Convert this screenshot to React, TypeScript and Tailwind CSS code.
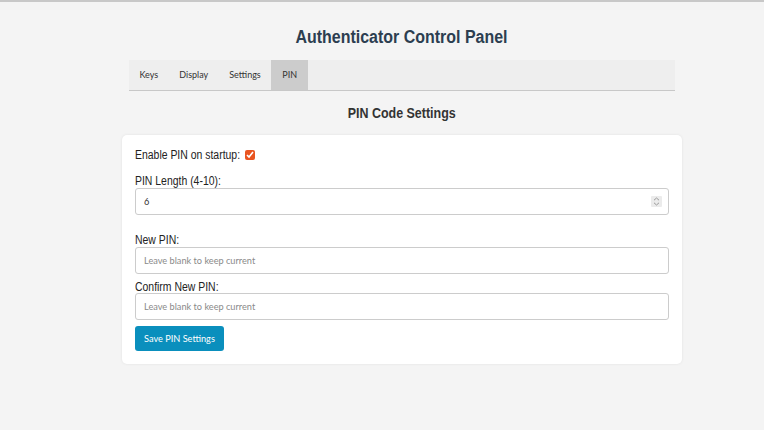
import React from "react";

export default function App() {
  const ui = { fontFamily: "Lato, 'Open Sans', sans-serif" };
  const inputCls =
    "block w-full h-[27px] border border-[#cccccc] rounded-[3px] px-[8px] text-[9.2px] text-[#333] bg-white outline-none placeholder:text-[#8a8a8a]";
  const label = "block w-[300px] whitespace-nowrap origin-left scale-x-[0.87] text-[12px] leading-[14px]";
  return (
    <div
      className="min-h-[430px] bg-[#f4f4f4] border-t-2 border-[#c8c8c8] text-[#222]"
      style={{ fontFamily: "'Liberation Sans', Arial, sans-serif" }}
    >
      <div className="flex flex-col items-center pl-[40px]">
        <h1 className="mt-[24px] text-[18px] leading-[22px] font-bold text-[#2c3e50] scale-x-[0.887] whitespace-nowrap">
          Authenticator Control Panel
        </h1>
        <div
          className="mt-[12px] w-[546px] h-[31px] bg-[#eeeeee] border-b border-[#c8c8c8] flex text-[9px] text-[#333]"
          style={ui}
        >
          <div className="px-[10.5px] flex items-center">Keys</div>
          <div className="px-[10.5px] flex items-center">Display</div>
          <div className="px-[10.5px] flex items-center">Settings</div>
          <div className="px-[11px] flex items-center bg-[#cccccc]">PIN</div>
        </div>
        <h2 className="mt-[14px] text-[14px] leading-[17px] font-bold text-[#333] scale-x-[0.89] whitespace-nowrap">
          PIN Code Settings
        </h2>
        <div className="mt-[13px] w-[560px] bg-white rounded-[5px] shadow-[0_0_3px_rgba(0,0,0,0.08)] px-[13px] pt-[13px] pb-[13px]">
          <div className="flex items-center h-[14px]">
            <span className="inline-block w-[107px] whitespace-nowrap origin-left scale-x-[0.87] text-[12px] leading-[14px]">
              Enable PIN on startup:
            </span>
            <input
              type="checkbox"
              defaultChecked
              className="ml-[3px] w-[10px] h-[10px] m-0 accent-[#e95420]"
            />
          </div>
          <div className={`mt-[12px] ${label}`}>PIN Length (4-10):</div>
          <div className="relative">
            <input
              type="number"
              defaultValue={6}
              className={`${inputCls} [appearance:textfield] [&::-webkit-inner-spin-button]:appearance-none [&::-webkit-outer-spin-button]:appearance-none`}
              style={ui}
            />
            <span className="absolute right-[7px] top-[8px] w-[11px] h-[11px] bg-[#ebebeb] rounded-[1px] flex items-center justify-center pointer-events-none">
              <svg width="7" height="9" viewBox="0 0 7 9" fill="none" stroke="#9a9a9a" strokeWidth="1">
                <path d="M1 3.2 L3.5 1 L6 3.2" />
                <path d="M1 5.8 L3.5 8 L6 5.8" />
              </svg>
            </span>
          </div>
          <div className={`mt-[18px] ${label}`}>New PIN:</div>
          <input
            type="password"
            placeholder="Leave blank to keep current"
            className={inputCls}
            style={ui}
          />
          <div className={`mt-[6px] ${label}`}>Confirm New PIN:</div>
          <input
            type="password"
            placeholder="Leave blank to keep current"
            className={`mt-[-1px] ${inputCls}`}
            style={ui}
          />
          <button
            className="block mt-[6px] h-[25px] px-[9px] rounded-[3px] bg-[#0a8fbd] text-white text-[9.2px]"
            style={ui}
          >
            Save PIN Settings
          </button>
        </div>
      </div>
    </div>
  );
}
